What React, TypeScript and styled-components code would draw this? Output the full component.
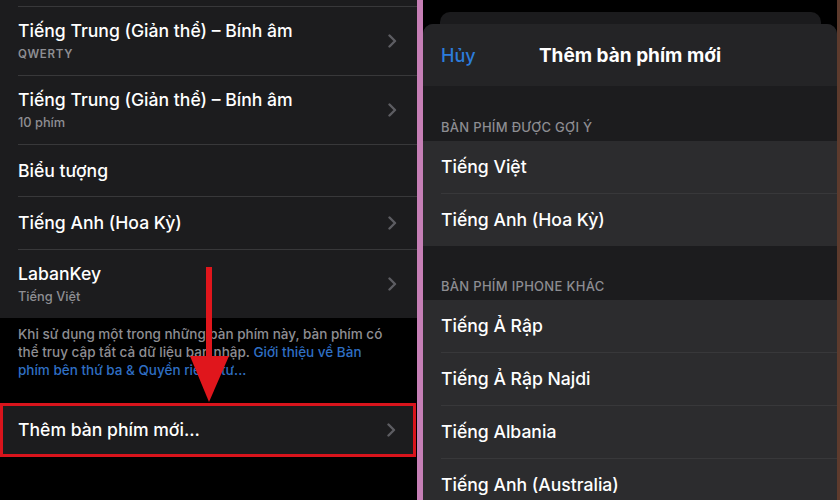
import React from "react";
import styled, { createGlobalStyle } from "styled-components";

const Global = createGlobalStyle`
  html, body { margin: 0; padding: 0; background: #000; }
  body { font-family: Inter, "Noto Sans", "Liberation Sans", sans-serif; -webkit-font-smoothing: antialiased; }
  * { box-sizing: border-box; }
`;

const Screen = styled.div`
  width: 840px;
  height: 500px;
  display: flex;
  overflow: hidden;
  background: #000;
`;

const LeftPanel = styled.div`
  position: relative;
  width: 417px;
  height: 500px;
  flex: none;
  display: flex;
  flex-direction: column;
  background: #000;
  overflow: hidden;
`;

const Divider = styled.div`
  width: 6px;
  flex: none;
  background: #c67fb6;
`;

const RightPanel = styled.div`
  flex: 1;
  display: flex;
  flex-direction: column;
  background: #000;
  border-right: 3px solid #5e3b2d;
  overflow: hidden;
`;

const Group = styled.div<{ $bg: string }>`
  background: ${(p) => p.$bg};
  display: flex;
  flex-direction: column;
`;

const TopStub = styled.div`
  height: 6px;
`;

const Row = styled.div`
  display: flex;
  padding-left: 18px;
`;

const RowInner = styled.div<{ $h: number; $sep?: boolean }>`
  flex: 1;
  height: ${(p) => p.$h}px;
  display: flex;
  align-items: center;
  justify-content: space-between;
  padding-right: 20px;
  border-top: ${(p) => (p.$sep ? "1px solid #38383a" : "none")};
`;

const TextBlock = styled.div`
  display: flex;
  flex-direction: column;
  gap: 4px;
`;

const Title = styled.div`
  color: #fff;
  font-size: 17.6px;
  line-height: 22px;
  font-weight: 500;
  white-space: nowrap;
`;

const Subtitle = styled.div<{ $caps?: boolean }>`
  color: #8e8e93;
  font-size: ${(p) => (p.$caps ? 11.5 : 12.8)}px;
  line-height: 16px;
  font-weight: ${(p) => (p.$caps ? 600 : 500)};
  letter-spacing: ${(p) => (p.$caps ? "0.7px" : "0")};
`;

const Footer = styled.div`
  padding: 7px 18px 0;
  color: #8e8e93;
  font-size: 13.5px;
  line-height: 18px;
  font-weight: 500;
  white-space: nowrap;
`;

const Link = styled.span`
  color: #2f6fc4;
`;

const AddRow = styled.div`
  margin-top: 24px;
  margin-right: 1px;
  height: 54px;
  border: 3px solid #d8141c;
  background: #1c1c1e;
  display: flex;
  align-items: center;
  justify-content: space-between;
  padding: 0 17px 0 15px;
`;

const ArrowLayer = styled.svg`
  position: absolute;
  left: 0;
  top: 0;
  pointer-events: none;
`;

const PeekCard = styled.div`
  margin: 12px 16px 0 17px;
  height: 12px;
  background: #1b1b1d;
  border-radius: 10px 10px 0 0;
  flex: none;
`;

const Sheet = styled.div`
  flex: 1;
  background: #1c1c1e;
  border-radius: 10px 10px 0 0;
  overflow: hidden;
  display: flex;
  flex-direction: column;
`;

const SheetHeader = styled.div`
  height: 62px;
  flex: none;
  background: #242426;
  display: grid;
  grid-template-columns: 1fr auto 1fr;
  align-items: center;
  padding: 0 18px;
`;

const Cancel = styled.div`
  color: #2c7cdc;
  font-size: 18px;
  font-weight: 500;
`;

const SheetTitle = styled.div`
  color: #fff;
  font-size: 19px;
  font-weight: 700;
  white-space: nowrap;
`;

const SectionHeader = styled.div<{ $h: number }>`
  height: ${(p) => p.$h}px;
  flex: none;
  display: flex;
  align-items: flex-end;
  padding: 0 18px 6px;
  color: #8d8d92;
  font-size: 13px;
  line-height: 16px;
  font-weight: 500;
  letter-spacing: 0.3px;
  text-transform: uppercase;
`;

const Chevron = () => (
  <svg width="9" height="14" viewBox="0 0 9 14" fill="none">
    <path d="M1.5 1.5 L7 7 L1.5 12.5" stroke="#5d5d62" strokeWidth="2.4" strokeLinecap="round" strokeLinejoin="round" />
  </svg>
);

type LeftItem = { title: string; sub?: string; caps?: boolean; h: number; chevron: boolean };

const leftItems: LeftItem[] = [
  { title: "Tiếng Trung (Giản thể) – Bính âm", sub: "QWERTY", caps: true, h: 69, chevron: true },
  { title: "Tiếng Trung (Giản thể) – Bính âm", sub: "10 phím", h: 69, chevron: true },
  { title: "Biểu tượng", h: 52, chevron: false },
  { title: "Tiếng Anh (Hoa Kỳ)", h: 53, chevron: true },
  { title: "LabanKey", sub: "Tiếng Việt", h: 69, chevron: true },
];

const suggested = ["Tiếng Việt", "Tiếng Anh (Hoa Kỳ)"];
const others = ["Tiếng Ả Rập", "Tiếng Ả Rập Najdi", "Tiếng Albania", "Tiếng Anh (Australia)"];

export default function App() {
  return (
    <>
      <Global />
      <Screen>
        <LeftPanel>
          <Group $bg="#1c1c1e">
            <TopStub />
            {leftItems.map((it, i) => (
              <Row key={i}>
                <RowInner $h={it.h} $sep>
                  <TextBlock>
                    <Title>{it.title}</Title>
                    {it.sub && <Subtitle $caps={it.caps}>{it.sub}</Subtitle>}
                  </TextBlock>
                  {it.chevron && <Chevron />}
                </RowInner>
              </Row>
            ))}
          </Group>
          <Footer>
            Khi sử dụng một trong những bàn phím này, bàn phím có
            <br />
            thể truy cập tất cả dữ liệu bạn nhập. <Link>Giới thiệu về Bàn</Link>
            <br />
            <Link>phím bên thứ ba &amp; Quyền riêng tư...</Link>
          </Footer>
          <AddRow>
            <Title>Thêm bàn phím mới...</Title>
            <Chevron />
          </AddRow>
          <ArrowLayer width="417" height="500" viewBox="0 0 417 500">
            <rect x="206" y="267" width="6" height="95" fill="#e0161c" />
            <polygon points="190,356 229,356 209,402" fill="#e0161c" />
          </ArrowLayer>
        </LeftPanel>
        <Divider />
        <RightPanel>
          <PeekCard />
          <Sheet>
            <SheetHeader>
              <Cancel>Hủy</Cancel>
              <SheetTitle>Thêm bàn phím mới</SheetTitle>
              <span />
            </SheetHeader>
            <SectionHeader $h={55}>Bàn phím được gợi ý</SectionHeader>
            <Group $bg="#2c2c2e">
              {suggested.map((t, i) => (
                <Row key={t}>
                  <RowInner $h={i === 0 ? 52 : 53} $sep={i > 0}>
                    <Title>{t}</Title>
                  </RowInner>
                </Row>
              ))}
            </Group>
            <SectionHeader $h={54}>Bàn phím iPhone khác</SectionHeader>
            <Group $bg="#2c2c2e">
              {others.map((t, i) => (
                <Row key={t}>
                  <RowInner $h={i === 0 ? 52 : 53} $sep={i > 0}>
                    <Title>{t}</Title>
                  </RowInner>
                </Row>
              ))}
            </Group>
          </Sheet>
        </RightPanel>
      </Screen>
    </>
  );
}
